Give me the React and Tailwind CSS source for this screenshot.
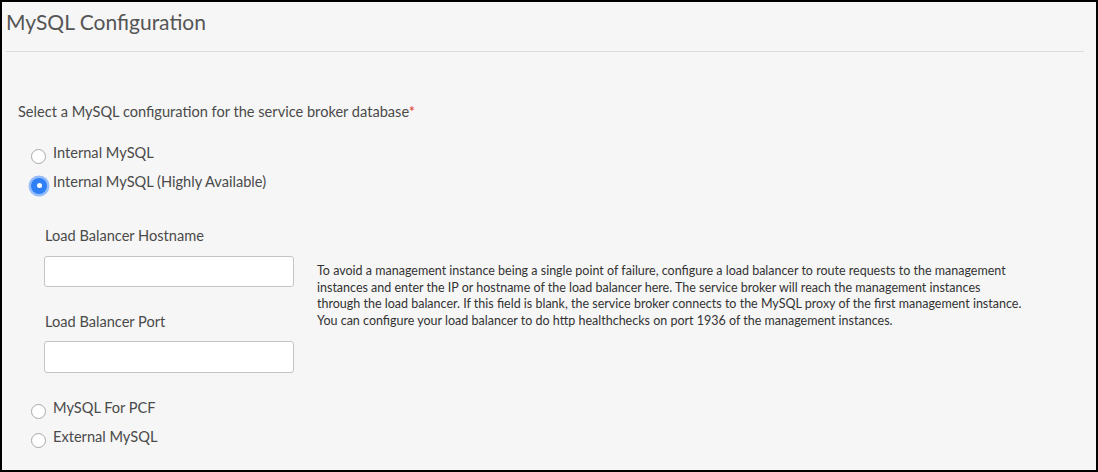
import React from "react";

function Radio({ checked, label }) {
  return (
    <label className="flex items-center h-[29px]">
      {checked ? (
        <span className="ml-[29px] mt-[4px] w-[16px] h-[16px] rounded-full bg-[#2f80f7] shadow-[0_0_0_2.5px_rgba(110,165,250,0.7)] flex items-center justify-center">
          <span className="w-[5px] h-[5px] rounded-full bg-white" />
        </span>
      ) : (
        <span className="ml-[29px] mt-[4px] w-[15px] h-[15px] rounded-full bg-white border border-[#a8a8a8]" />
      )}
      <span className={checked ? "ml-[6px] mb-[4px] leading-[18px]" : "ml-[7px] mb-[4px] leading-[18px]"}>{label}</span>
    </label>
  );
}

export default function App() {
  return (
    <div
      className="w-[1098px] h-[472px] border-2 border-black bg-[#f6f6f6] text-[#4a4a4a] box-border overflow-hidden"
      style={{ fontFamily: "Lato, 'Open Sans', sans-serif" }}
    >
      <div className="pl-[4px] pr-[12px]">
        <h1 className="text-[21px] leading-[22px] pt-[9px] text-[#555] font-normal">MySQL Configuration</h1>
        <div className="mt-[18px] h-[1px] bg-[#dcdcdc]" />
      </div>
      <div className="pt-[51px] text-[14.6px]">
        <div className="pl-[16px] leading-[18px]">
          Select a MySQL configuration for the service broker database
          <span className="text-[#e0322b]">*</span>
        </div>
        <div className="mt-[19px]">
          <Radio label="Internal MySQL" />
          <Radio checked label="Internal MySQL (Highly Available)" />
        </div>
        <div className="flex pl-[42px] mt-[29px]">
          <div className="w-[250px] shrink-0">
            <div className="leading-[18px] pl-[1px]">Load Balancer Hostname</div>
            <div className="mt-[11px] h-[31px] rounded-[3px] border border-[#c4c4c4] bg-white" />
            <div className="mt-[26px] leading-[18px] pl-[1px]">Load Balancer Port</div>
            <div className="mt-[10px] h-[32px] rounded-[3px] border border-[#c4c4c4] bg-white" />
          </div>
          <p className="ml-[23px] mt-[36px] w-[708px] text-[12.5px] leading-[16.5px] text-[#333]">
            To avoid a management instance being a single point of failure, configure a load balancer to route requests to the management instances and enter the IP or hostname of the load balancer here. The service broker will reach the management instances through the load balancer. If this field is blank, the service broker connects to the MySQL proxy of the first management instance. You can configure your load balancer to do http healthchecks on port 1936 of the management instances.
          </p>
        </div>
        <div className="mt-[22px]">
          <Radio label="MySQL For PCF" />
          <Radio label="External MySQL" />
        </div>
      </div>
    </div>
  );
}
